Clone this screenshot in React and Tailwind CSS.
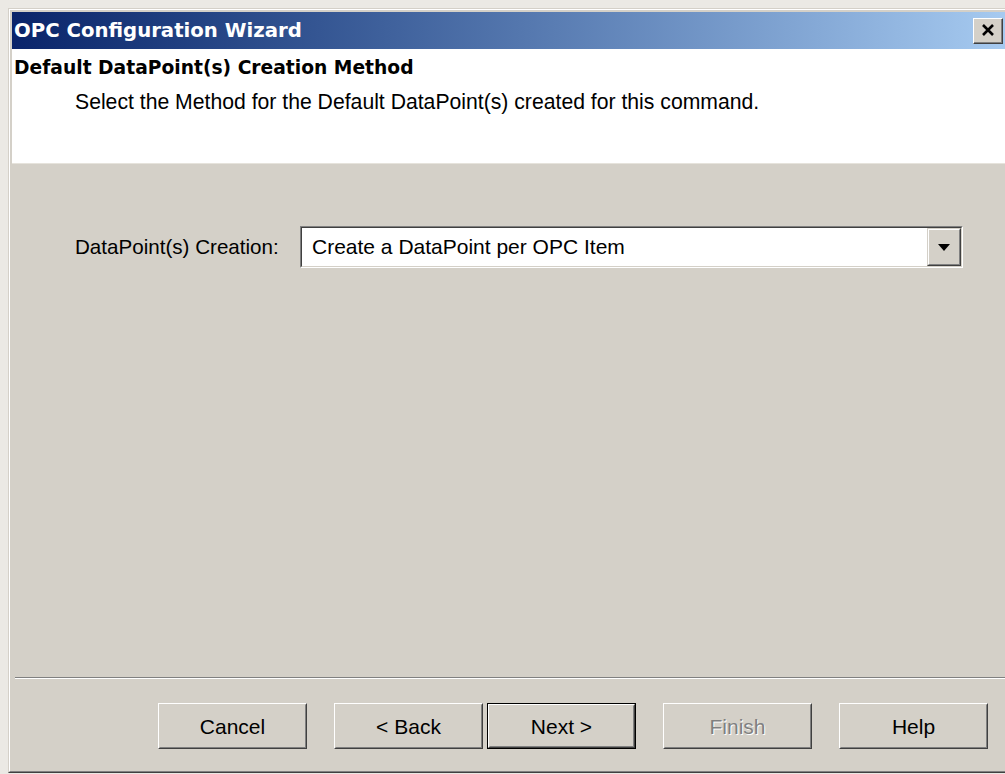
import React from 'react'

const uiFont = { fontFamily: '"Liberation Sans", Arial, sans-serif' }
const boldFont = { fontFamily: '"DejaVu Sans", Verdana, sans-serif' }

// classic raised 3D push button
function Button({ children, primary = false, disabled = false, className = '' }) {
  const face = (
    <div className="h-full w-full border-t border-l border-r border-b border-t-[#ffffff] border-l-[#ffffff] border-r-[#404040] border-b-[#404040] bg-[#d4d0c8]">
      <div className="h-full w-full flex items-center justify-center border-r border-b border-r-[#808080] border-b-[#808080] border-t border-l border-t-[#d4d0c8] border-l-[#d4d0c8]">
        <span
          className={`text-[21px] leading-none ${disabled ? 'text-[#808080] [text-shadow:1px_1px_0_#ffffff]' : 'text-black'}`}
        >
          {children}
        </span>
      </div>
    </div>
  )
  return (
    <div className={`h-[46px] w-[149px] shrink-0 ${primary ? 'border border-black' : ''} ${className}`}>
      {face}
    </div>
  )
}

function CloseButton() {
  return (
    <div className="mr-[2px] h-[26px] w-[30px] border-t border-l border-r border-b border-t-[#ffffff] border-l-[#ffffff] border-r-[#404040] border-b-[#404040] bg-[#d4d0c8]">
      <div className="h-full w-full flex items-center justify-center border-r border-b border-r-[#808080] border-b-[#808080]">
        <svg width="14" height="12" viewBox="0 0 14 12">
          <path d="M2 1 L12 11 M12 1 L2 11" stroke="#000" strokeWidth="2.6" />
        </svg>
      </div>
    </div>
  )
}

function ComboBox({ value }) {
  return (
    <div className="h-[42px] w-[663px] border-t border-l border-r border-b border-t-[#808080] border-l-[#808080] border-r-[#ffffff] border-b-[#ffffff]">
      <div className="h-full w-full flex border-t border-l border-r border-b border-t-[#404040] border-l-[#404040] border-r-[#d4d0c8] border-b-[#d4d0c8] bg-white">
        <div className="flex-1 flex items-center pl-[10px] text-[21px] text-black">{value}</div>
        <div className="w-[34px] h-full border-t border-l border-r border-b border-t-[#d4d0c8] border-l-[#d4d0c8] border-r-[#404040] border-b-[#404040] bg-[#d4d0c8]">
          <div className="h-full w-full flex items-center justify-center border-t border-l border-r border-b border-t-[#ffffff] border-l-[#ffffff] border-r-[#808080] border-b-[#808080]">
            <svg width="12" height="7" viewBox="0 0 12 7">
              <path d="M0 0 H12 L6 7 Z" fill="#000" />
            </svg>
          </div>
        </div>
      </div>
    </div>
  )
}

export default function App() {
  return (
    <div className="w-[1005px] h-[774px] overflow-hidden bg-[#ebe9e4]" style={uiFont}>
      <div className="ml-[8px] mt-[8px] w-[1001px] h-[765px] border border-t-[#d4d0c8] border-l-[#d4d0c8] border-r-[#404040] border-b-[#404040]">
        <div className="h-full w-full border border-t-[#ffffff] border-l-[#ffffff] border-r-[#808080] border-b-[#808080] bg-[#d4d0c8] p-[2px] flex flex-col">
          {/* title bar */}
          <div className="h-[37px] shrink-0 flex items-center justify-between bg-gradient-to-r from-[#0a246a] to-[#a6caf0]">
            <span className="pl-[2px] text-[19.7px] font-bold text-white" style={boldFont}>
              OPC Configuration Wizard
            </span>
            <CloseButton />
          </div>

          {/* wizard header */}
          <div className="h-[115px] shrink-0 bg-white border-b border-b-[#e6e3dc] pl-[2px] pt-[7px]">
            <div className="h-[24px] text-[18.7px] font-bold leading-[24px] text-black" style={boldFont}>
              Default DataPoint(s) Creation Method
            </div>
            <div className="mt-[10px] pl-[61px] h-[24px] text-[21.2px] leading-[24px] text-black">
              Select the Method for the Default DataPoint(s) created for this command.
            </div>
          </div>

          {/* page body */}
          <div className="h-[513px] shrink-0 pl-[63px] pt-[62px]">
            <div className="flex items-center">
              <div className="w-[225px] text-[20.6px] text-black">DataPoint(s) Creation:</div>
              <ComboBox value="Create a DataPoint per OPC Item" />
            </div>
          </div>

          {/* etched separator */}
          <div className="ml-[3px] shrink-0 border-t border-t-[#808080] border-b border-b-[#ffffff]" />

          {/* wizard buttons */}
          <div className="flex pl-[146px] pt-[24px]">
            <Button>Cancel</Button>
            <Button className="ml-[27px]">&lt; Back</Button>
            <Button primary className="ml-[4px]">Next &gt;</Button>
            <Button disabled className="ml-[27px]">Finish</Button>
            <Button className="ml-[27px]">Help</Button>
          </div>
        </div>
      </div>
    </div>
  )
}
